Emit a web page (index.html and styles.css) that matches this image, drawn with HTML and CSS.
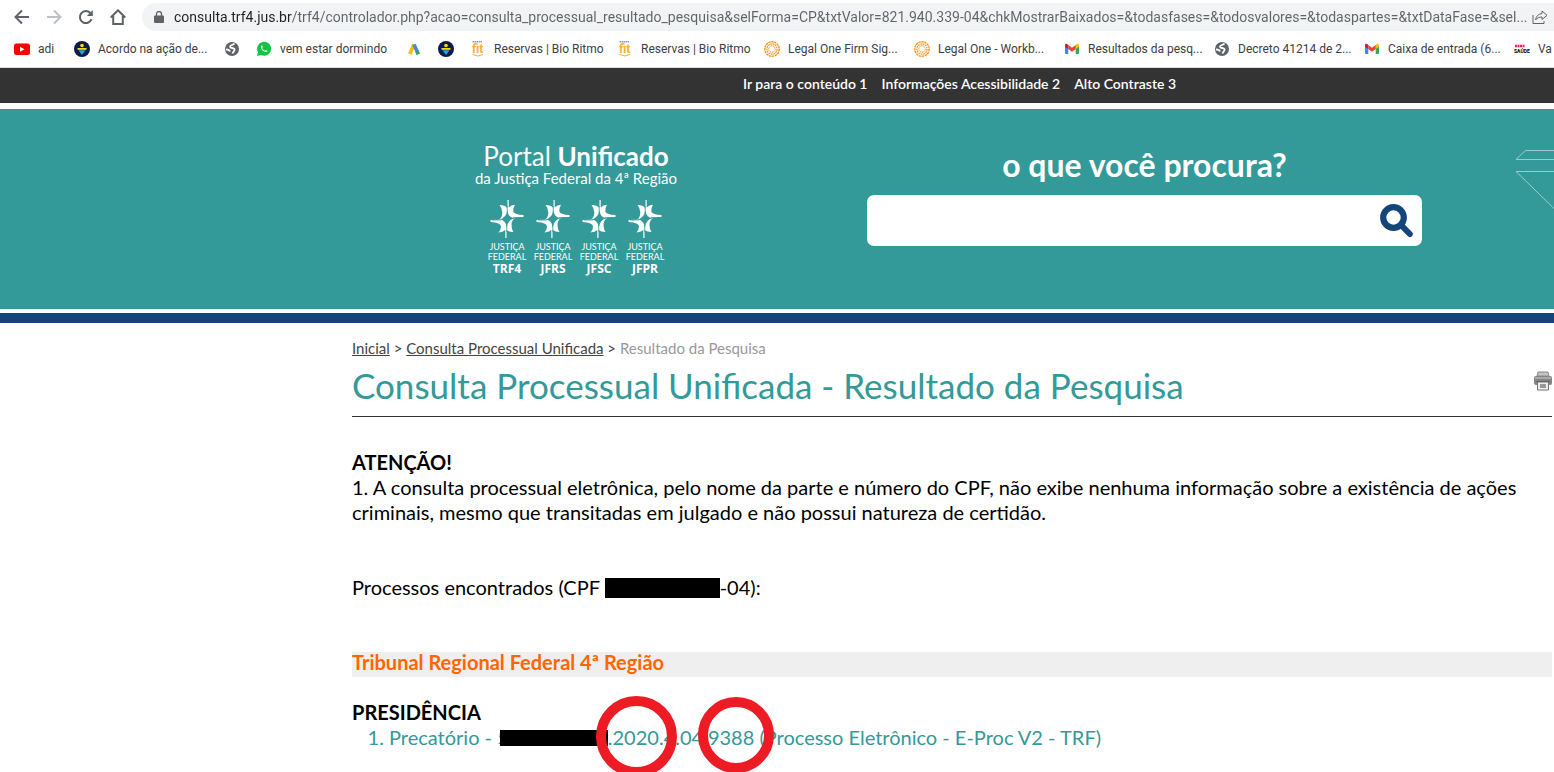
FILE: index.html
```html
<!DOCTYPE html>
<html lang="pt-BR">
<head>
    <meta charset="UTF-8">
    <meta name="viewport" content="width=device-width, initial-scale=1.0">
    <title>Consulta Processual Unificada - Resultado da Pesquisa</title>
    <link rel="stylesheet" href="styles.css">
</head>
<body>
    <!-- shared icons -->
    <svg class="sprite" width="0" height="0" aria-hidden="true">
        <symbol id="globe" viewBox="0 0 16 16">
            <circle cx="8" cy="8" r="7" fill="#5f6368"/>
            <path d="M10.500 2.500C9.500 4 6 3.800 6 5.700c0 1.800 3.800.8 4.500 2.500.8 1.900-1.500 2-2 4.300M2 8.500c2 0 3.500.3 4 2" fill="none" stroke="#fff" stroke-width="1.800"/>
        </symbol>
        <symbol id="acordo" viewBox="0 0 16 16">
            <circle cx="8" cy="8" r="8" fill="#0d1b4c"/>
            <circle cx="8" cy="4.500" r="1.800" fill="#ffd617"/>
            <path d="M3.500 7h9v1.800h-9z" fill="#ffd617"/>
            <path d="M4.500 9.300h7L8 14z" fill="#29a3dc"/>
        </symbol>
        <symbol id="fit" viewBox="0 0 16 16">
            <path d="M2.500 .8h10" stroke="#999" stroke-width="1.500" stroke-dasharray="1.500 .5"/>
            <text x="2" y="12" class="fit">fit</text>
            <path d="M2.500 13.500q5.500 3 10.500 0" fill="none" stroke="#fbb034"/>
        </symbol>
        <symbol id="legalone" viewBox="0 0 16 16">
            <g fill="none" stroke="#f7931e">
                <circle cx="8" cy="8" r="7.200" stroke-width="1.400" stroke-dasharray="2.400 .6"/>
                <circle cx="8" cy="8" r="5.100" stroke-width="1.200" stroke-dasharray="1.800 .6"/>
                <circle cx="8" cy="8" r="3.200" stroke-width="1" stroke-dasharray="1.400 .5"/>
            </g>
        </symbol>
        <symbol id="gmail" viewBox="0 0 16 16">
            <path d="M1 4.500 4.300 7v6H2a1 1 0 0 1-1-1z" fill="#4285f4"/>
            <path d="M15 4.500 11.700 7v6H14a1 1 0 0 0 1-1z" fill="#34a853"/>
            <path d="M11.700 4 13 3c.9-.6 2 0 2 1.200v1.600L11.700 8z" fill="#fbbc04"/>
            <path d="M4.300 4 3 3C2.100 2.400 1 3 1 4.200v1.600L4.300 8z" fill="#c5221f"/>
            <path d="M4.300 4 8 6.800 11.700 4v4L8 10.800 4.300 8z" fill="#ea4335"/>
        </symbol>
        <symbol id="jf" viewBox="0 0 34 38">
            <path fill="#fff" d="M17.500 0h1.200v7.500Q21 5 25 4.700 23 8 23.300 11.200 23.800 14.500 33.500 15v2L25.500 17.500Q21.500 20 21.500 25 21.500 29.500 23.500 32 19 32 16.500 30V38h-1.200V30Q13 32 8.500 32.500 11 29.500 11 26.500 11 22.800 .5 22V20L8.500 19.800Q12.300 18 12.300 12.500 12.200 8 9.500 5 15 5 17.500 8z"/>
            <path fill="#399" d="M17.300 10Q17.800 17.500 25 18.200 17.500 19.500 16.700 28 16.200 19.800 9 19.600 16.500 18 17.300 10z"/>
            <path fill="none" stroke="#399" stroke-width=".8" d="M17.200 6v8M16.800 32v-8M32 17.600h-9M2 20h9"/>
        </symbol>
    </svg>

    <div class="browser">
        <div class="toolbar">
            <button class="nav-btn" aria-label="Voltar"><svg width="16" height="16" viewBox="0 0 16 16"><path d="M15 8H2M8 1.500 1.500 8 8 14.500"/></svg></button>
            <button class="nav-btn disabled" aria-label="Avançar"><svg width="16" height="16" viewBox="0 0 16 16"><path d="M1 8h13M8 1.500 14.500 8 8 14.500"/></svg></button>
            <button class="nav-btn" aria-label="Atualizar"><svg width="16" height="16" viewBox="0 0 16 16"><path d="M13.500 10.200A6 6 0 1 1 12.300 4"/><path class="solid" d="M14.800 1v6h-6z"/></svg></button>
            <button class="nav-btn" aria-label="Página inicial"><svg width="16" height="16" viewBox="0 0 16 16"><path d="M.8 8.500 8 1.300l7.200 7.200M3.200 7v8h9.600V7"/></svg></button>
            <div class="address">
                <svg class="lock" width="10" height="12" viewBox="0 0 10 12"><path d="M1 4.500h8a1 1 0 0 1 1 1V11a1 1 0 0 1-1 1H1a1 1 0 0 1-1-1V5.500a1 1 0 0 1 1-1z" fill="#5f6368"/><path d="M2.500 5V3a2.500 2.500 0 0 1 5 0v2" fill="none" stroke="#5f6368" stroke-width="1.300"/></svg>
                <input class="url" type="text" aria-label="Endereço" value="consulta.trf4.jus.br/trf4/controlador.php?acao=consulta_processual_resultado_pesquisa&amp;selForma=CP&amp;txtValor=821.940.339-04&amp;chkMostrarBaixados=&amp;todasfases=&amp;todosvalores=&amp;todaspartes=&amp;txtDataFase=&amp;sel...">
                <button class="share" aria-label="Compartilhar"><svg width="16" height="16" viewBox="0 0 16 16"><path d="M1 6v8.500h11V12"/><path d="M10 2l5 4.300-5 4.200V8C7 8 5 9 3.600 11 4 7.500 6 5 10 4.500z"/></svg></button>
            </div>
        </div>
        <nav class="bookmarks">
            <a href="#"><svg viewBox="0 0 16 16"><rect y="2.500" width="16" height="11.500" rx="2.500" fill="#f00"/><path d="M6 5.800v5l4.500-2.500z" fill="#fff"/></svg><span>adi</span></a>
            <a href="#" class="long"><svg><use href="#acordo"/></svg><span>Acordo na ação de...</span></a>
            <a href="#" aria-label="Site"><svg><use href="#globe"/></svg></a>
            <a href="#" class="long"><svg viewBox="0 0 16 16"><path d="M1 15l1-3.800A7 7 0 1 1 4.900 14z" fill="#12c443"/><path d="M5.500 4.500c-1.200 1-.8 3 1 4.800s3.900 2.300 4.900 1.100c.4-.6 0-.8-1.500-1.500-.6-.2-.8 1-1.400.7C7.300 9 6.600 8.200 6.200 7.300c-.2-.5.8-.9.600-1.400-.5-1.400-.8-1.800-1.300-1.400z" fill="#fff"/></svg><span>vem estar dormindo</span></a>
            <a href="#" aria-label="Anúncios"><svg viewBox="0 0 16 16"><path d="M8 3.500 3.800 13" stroke="#fbbc04" stroke-width="3.800"/><path d="M8 3.500l4.200 9.500" stroke="#4285f4" stroke-width="3.500"/><path d="M10.800 10l1.500 3.200" stroke="#34a853" stroke-width="3.500"/></svg></a>
            <a href="#" aria-label="Acordo"><svg><use href="#acordo"/></svg></a>
            <a href="#" class="medium"><svg><use href="#fit"/></svg><span>Reservas | Bio Ritmo</span></a>
            <a href="#" class="medium"><svg><use href="#fit"/></svg><span>Reservas | Bio Ritmo</span></a>
            <a href="#" class="long"><svg><use href="#legalone"/></svg><span>Legal One Firm Sig...</span></a>
            <a href="#" class="long"><svg><use href="#legalone"/></svg><span>Legal One - Workb...</span></a>
            <a href="#" class="long"><svg><use href="#gmail"/></svg><span>Resultados da pesq...</span></a>
            <a href="#" class="long"><svg><use href="#globe"/></svg><span>Decreto 41214 de 2...</span></a>
            <a href="#" class="long"><svg><use href="#gmail"/></svg><span>Caixa de entrada (6...</span></a>
            <a href="#"><svg viewBox="0 0 16 16"><path d="M1 5h10" stroke="#e0245e" stroke-width="2.500" stroke-dasharray="2 .5"/><text x="0" y="12" class="saude">SAÚDE</text></svg><span>Va</span></a>
        </nav>
    </div>

    <nav class="access-bar">
        <a href="#conteudo">Ir para o conteúdo 1</a>
        <a href="#">Informações Acessibilidade 2</a>
        <a href="#">Alto Contraste 3</a>
    </nav>

    <header class="portal">
        <a class="logo" href="#">
            <span class="logo-title">Portal <b>Unificado</b></span>
            <span class="logo-sub">da Justiça Federal da 4ª Região</span>
            <span class="courts">
                <span class="court"><svg><use href="#jf"/></svg><span>JUSTIÇA</span><span>FEDERAL</span><b>TRF4</b></span>
                <span class="court"><svg><use href="#jf"/></svg><span>JUSTIÇA</span><span>FEDERAL</span><b>JFRS</b></span>
                <span class="court"><svg><use href="#jf"/></svg><span>JUSTIÇA</span><span>FEDERAL</span><b>JFSC</b></span>
                <span class="court"><svg><use href="#jf"/></svg><span>JUSTIÇA</span><span>FEDERAL</span><b>JFPR</b></span>
            </span>
        </a>
        <form class="search">
            <label for="busca">o que você procura?</label>
            <div class="search-box">
                <input id="busca" type="text">
                <button type="button" aria-label="Pesquisar"><svg width="34" height="34" viewBox="0 0 34 34"><circle cx="13.500" cy="13.500" r="10.300" fill="none" stroke="#13447a" stroke-width="6.200"/><path d="M21 21l8.800 9" stroke="#13447a" stroke-width="6" stroke-linecap="round"/></svg></button>
            </div>
        </form>
        <svg class="deco" width="39" height="60" viewBox="0 0 39 60"><path d="M39 .5H10.500L1 9.500h38M39 21.500H1l38 37"/></svg>
    </header>

    <main id="conteudo">
        <div class="breadcrumb"><a href="#">Inicial</a> &gt; <a href="#">Consulta Processual Unificada</a> &gt; <span>Resultado da Pesquisa</span></div>
        <div class="title-row">
            <h1>Consulta Processual Unificada - Resultado da Pesquisa</h1>
            <button class="print" aria-label="Imprimir"><svg width="18" height="20" viewBox="0 0 18 20"><path d="M4 1h10l1 4H3z" fill="#c4c4c4" stroke="#8a8a8a"/><rect x="0" y="5" width="18" height="9" rx="2" fill="#858585"/><path d="M1 7h16" stroke="#d0d0d0"/><path d="M2.500 10.500h13" stroke="#555"/><path d="M3.500 11h11v8h-11z" fill="#eee" stroke="#777"/><path d="M6 13h6v4H6z" fill="#999"/></svg></button>
        </div>

        <section class="notice">
            <strong>ATENÇÃO!</strong>
            <p>1. A consulta processual eletrônica, pelo nome da parte e número do CPF, não exibe nenhuma informação sobre a existência de ações criminais, mesmo que transitadas em julgado e não possui natureza de certidão.</p>
        </section>

        <p class="found">Processos encontrados (CPF <span class="redact cpf"></span>-04):</p>

        <h2>Tribunal Regional Federal 4ª Região</h2>

        <h3>PRESIDÊNCIA</h3>
        <ol class="processes">
            <li><a href="#">Precatório - 5<span class="redact number"></span>.<span class="mark">2020</span>.4.04.<span class="mark small">9388</span> (Processo Eletrônico - E-Proc V2 - TRF)</a></li>
        </ol>
    </main>
</body>
</html>
```
FILE: styles.css
```css
*, *::before, *::after {
    box-sizing: border-box;
}
body {
    margin: 0;
    background: #fff;
    color: #000;
    font-family: Lato, sans-serif;
    font-size: 20px;
    line-height: 25px;
    overflow-x: hidden;
}
button {
    background: none;
    border: none;
    padding: 0;
    cursor: pointer;
}
svg {
    display: block;
    flex: none;
}
.sprite {
    position: absolute;
}

/* browser bar */
.browser {
    font-family: Roboto, "Open Sans", sans-serif;
    border-bottom: 1px solid #dadce0;
    overflow: hidden;
}
.toolbar {
    display: flex;
    align-items: center;
    gap: 16px;
    height: 34px;
    padding-left: 14px;
}
.nav-btn svg {
    fill: none;
    stroke: #5f6368;
    stroke-width: 2;
}
.nav-btn .solid {
    fill: #5f6368;
    stroke: none;
}
.nav-btn.disabled svg {
    stroke: #bdc1c6;
}
.address {
    flex: 1;
    display: flex;
    align-items: center;
    height: 28px;
    padding: 0 6px 0 12px;
    background: #f1f3f4;
    border-radius: 14px 0 0 14px;
}
.url {
    flex: 1;
    min-width: 0;
    margin: 0 2px 0 10px;
    padding: 0;
    border: none;
    font-family: inherit;
    font-size: 14px;
    color: transparent;
    background: linear-gradient(90deg, #202124 118px, #5f6368 118px);
    background-clip: text;
    -webkit-background-clip: text;
}
.share svg {
    fill: none;
    stroke: #5f6368;
    stroke-width: 1;
}
.bookmarks {
    display: flex;
    align-items: center;
    gap: 16px;
    height: 33px;
    padding: 0 0 4px 14px;
}
.bookmarks a {
    display: flex;
    align-items: center;
    flex: none;
    gap: 8px;
    color: #3c4043;
    font-size: 12px;
    line-height: 16px;
    text-decoration: none;
    white-space: nowrap;
}
.bookmarks span {
    min-width: 20px;
}
.bookmarks .long span {
    width: 110px;
}
.bookmarks .medium span {
    width: 107px;
}
.bookmarks svg {
    width: 16px;
    height: 16px;
}
.fit {
    font-size: 12px;
    font-weight: bold;
    fill: #fbb034;
}
.saude {
    font-size: 5px;
    font-weight: bold;
    fill: #000;
}

/* accessibility links */
.access-bar {
    display: flex;
    gap: 14px;
    height: 35px;
    padding-left: 743px;
    margin-bottom: 6px;
    background: #333;
}
.access-bar a {
    color: #fff;
    font-size: 14px;
    font-weight: 600;
    line-height: 32px;
    text-decoration: none;
    white-space: nowrap;
}

/* portal header */
.portal {
    position: relative;
    display: flex;
    align-items: flex-start;
    height: 200px;
    padding: 34px 132px 0 472px;
    gap: 187px;
    background: #339999;
    color: #fff;
}
.portal::after {
    content: "";
    position: absolute;
    left: 0;
    right: 0;
    top: 100%;
    height: 14px;
    border-top: 4px solid #fff;
    background: #13447a;
}
.logo {
    flex: none;
    display: flex;
    flex-direction: column;
    align-items: center;
    width: 208px;
    color: #fff;
    text-decoration: none;
    white-space: nowrap;
}
.logo-title {
    font-size: 26px;
    line-height: 26px;
}
.logo-sub {
    font-size: 15px;
    line-height: 18px;
}
.courts {
    display: grid;
    grid-template-columns: repeat(4, 46px);
    margin-top: 13px;
}
.court {
    display: flex;
    flex-direction: column;
    align-items: center;
    font-size: 9px;
    line-height: 10px;
}
.court svg {
    width: 34px;
    height: 38px;
    margin-bottom: 4px;
}
.court b {
    font-family: "Open Sans", sans-serif;
    font-size: 12px;
    line-height: 14px;
}
.search {
    flex: 1;
    text-align: center;
}
.search label {
    display: block;
    font-size: 32px;
    font-weight: bold;
    line-height: 44px;
    margin-bottom: 8px;
}
.search-box {
    display: flex;
    align-items: center;
    height: 51px;
    padding-right: 8px;
    background: #fff;
    border-radius: 7px;
}
.search-box input {
    flex: 1;
    min-width: 0;
    height: 100%;
    border: none;
    background: none;
    padding: 0 14px;
    font: inherit;
}
.deco {
    position: absolute;
    right: 0;
    top: 41px;
    fill: none;
    stroke: #99cccc;
}

/* content */
main {
    margin-top: 14px;
    padding: 14px 2px 20px 352px;
    overflow: hidden;
}
h1, h2, h3, p {
    margin: 0;
}
.breadcrumb {
    font-size: 15px;
    line-height: 22px;
    color: #444;
}
.breadcrumb a {
    color: #444;
}
.breadcrumb span {
    color: #999;
}
.title-row {
    display: flex;
    align-items: center;
    justify-content: space-between;
    height: 58px;
    padding-bottom: 6px;
    margin-bottom: 33px;
    border-bottom: 1px solid #333;
}
h1 {
    color: #339999;
    font-size: 35px;
    font-weight: normal;
    line-height: 44px;
}
.print {
    margin-bottom: 8px;
}
.notice {
    margin-bottom: 50px;
}
.found {
    margin-bottom: 52px;
}
h2 {
    background: #efefef;
    color: #ff6600;
    font-size: 20px;
    line-height: 21px;
    padding-bottom: 4px;
    margin-bottom: 23px;
}
h3 {
    font-size: 20px;
}
.processes {
    margin: 0;
    padding: 0 0 2px 37px;
    color: #339999;
}
.processes a {
    color: #339999;
    text-decoration: none;
}
.redact {
    display: inline-block;
    background: #000;
}
.cpf {
    width: 115px;
    height: 20px;
    vertical-align: -3px;
}
.number {
    width: 108px;
    height: 16px;
    margin-left: -9px;
    vertical-align: -1px;
    position: relative;
}

/* red circles around parts of the number */
.mark {
    position: relative;
}
.mark::after {
    content: "";
    position: absolute;
    left: 50%;
    top: 50%;
    width: 81px;
    height: 81px;
    margin: -41px 0 0 -40px;
    border: 10px solid #ed1c24;
    border-radius: 50%;
}
.mark.small::after {
    width: 76px;
    height: 76px;
    margin: -40px 0 0 -33px;
}
```
